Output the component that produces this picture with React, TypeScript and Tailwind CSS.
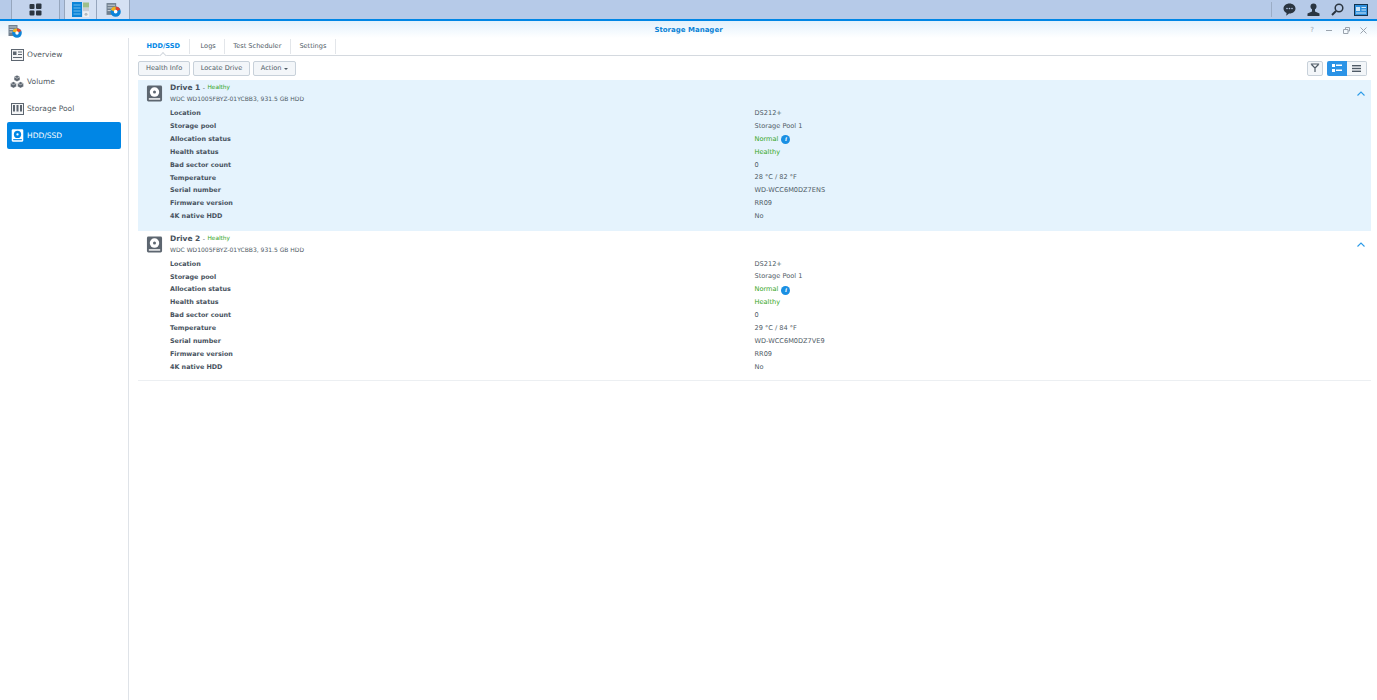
const font = { fontFamily: '"DejaVu Sans", sans-serif' };

function HddIcon({ light = false, size = 18 }: { light?: boolean; size?: number }) {
  const body = light ? "#ffffff" : "#5d6670";
  const inner = light ? "#0086e5" : "#ffffff";
  return (
    <svg width={size} height={size} viewBox="0 0 18 18">
      <rect x="1" y="0.5" width="16" height="17" rx="1.5" fill={body} />
      <circle cx="9" cy="7.5" r="5" fill={inner} />
      <circle cx="9" cy="7.5" r="1.6" fill={body} />
      <rect x="3" y="14" width="12" height="1.5" fill={inner} />
    </svg>
  );
}

function OverviewIcon() {
  return (
    <svg width="13" height="12" viewBox="0 0 13 12">
      <rect x="0.5" y="0.5" width="12" height="11" fill="#f4f5f6" stroke="#5d6670" />
      <rect x="2" y="2.500" width="3.500" height="3.500" fill="#5d6670" />
      <path d="M7 3h4M7 5.500h4M2 8.500h9" stroke="#5d6670" />
    </svg>
  );
}

function VolumeIcon() {
  return (
    <svg width="14" height="14" viewBox="0 0 13 13" fill="#5d6670" stroke="#ffffff" strokeWidth="0.300">
      <path d="M6.500 0.300l2.700 1.400v3L6.500 6.100 3.800 4.700v-3z" />
      <path d="M3.200 6.200l2.700 1.400v3l-2.700 1.500L0.500 10.600v-3z" />
      <path d="M9.800 6.200l2.700 1.400v3l-2.700 1.500-2.700-1.500v-3z" />
      <path d="M3.800 1.700l2.700 1.400 2.700-1.400M.5 7.600l2.700 1.400 2.700-1.400M7.100 7.600l2.700 1.400 2.700-1.400" fill="none" strokeWidth="0.500" />
    </svg>
  );
}

function PoolIcon() {
  return (
    <svg width="13" height="12" viewBox="0 0 13 12">
      <rect x="0.5" y="0.500" width="12" height="11" fill="#f4f5f6" stroke="#5d6670" />
      <path d="M3 2v6.500M6.500 2v6.500M10 2v6.500" stroke="#5d6670" strokeWidth="2" />
    </svg>
  );
}

function AppIcon({ size = 14 }: { size?: number }) {
  return (
    <svg width={size} height={size} viewBox="0 0 14 14">
      <rect x="0.500" y="1" width="9" height="11" fill="#71808f" />
      <path d="M1.500 3h7M1.500 5.500h7M1.500 8h7" stroke="#d9dfe5" strokeWidth="0.800" />
      <circle cx="9" cy="9" r="4.800" fill="#0b84d9" />
      <path d="M9 9V4.200A4.800 4.800 0 0 1 13.300 7z" fill="#e2412d" />
      <path d="M9 9L4.500 7.400A4.800 4.800 0 0 1 9 4.200z" fill="#f4b21c" />
      <circle cx="9" cy="9" r="1.700" fill="#ffffff" />
    </svg>
  );
}

function GridIcon() {
  return (
    <svg width="13" height="13" viewBox="0 0 13 13" fill="#2b3540">
      <rect x="0.500" y="1" width="5" height="5" rx="1" />
      <rect x="7" y="0.500" width="5.500" height="5.500" rx="1" />
      <rect x="0.500" y="7.500" width="5" height="5" rx="1" />
      <rect x="7" y="7.500" width="5.500" height="5" rx="1" />
    </svg>
  );
}

function PanelIcon() {
  return (
    <svg width="17" height="15" viewBox="0 0 17 15">
      <rect x="0" y="0" width="10" height="15" fill="#0a84d8" />
      <path d="M1.500 3h7M1.500 6h7M1.500 9h7M1.500 12h7" stroke="#8ccbf3" strokeWidth="0.800" />
      <rect x="11" y="0.500" width="6" height="5" fill="#9dbf8a" />
      <rect x="11" y="6" width="6" height="3" fill="#c9ced3" />
      <rect x="11" y="9.500" width="6" height="5.500" fill="#eef0f2" />
      <circle cx="14" cy="12.200" r="1.500" fill="#b3b9bf" />
    </svg>
  );
}

function Tab({ label, active = false, extra = false }: { label: string; active?: boolean; extra?: boolean }) {
  return (
    <div
      className={`relative flex h-[15px] items-center border-r border-[#e3e6ea] text-[6.600px] ${extra ? "pl-[11px] pr-[8px]" : "px-[8.500px]"} ${active ? "font-bold text-[#0086e5]" : "text-[#4f5b66]"}`}
    >
      {label}
      {active && (
        <span className="absolute bottom-[-4px] left-1/2 h-[5px] w-[5px] -translate-x-1/2 rotate-45 border-l border-t border-[#d4d9df] bg-white" />
      )}
    </div>
  );
}

function Btn({ children, tight = false }: { children: React.ReactNode; tight?: boolean }) {
  return (
    <div className={`flex h-[15px] items-center rounded-[2px] border border-[#c8d1da] bg-[#f3f6f9] pt-[1px] text-[6.600px] text-[#4f5b66] ${tight ? "px-[6.500px]" : "px-[7px]"}`}>
      {children}
    </div>
  );
}

function NavItem({ icon, label, active = false }: { icon: React.ReactNode; label: string; active?: boolean }) {
  return (
    <div
      className={`flex h-[27px] items-center gap-[3px] rounded-[2px] pl-[3px] text-[7.500px] ${active ? "bg-[#0086e5] text-white" : "text-[#50595f]"}`}
    >
      <span className="flex w-[14px] justify-center">{icon}</span>
      {label}
    </div>
  );
}

type Row = [string, string, string?];

function Drive({ name, rows, open }: { name: string; rows: Row[]; open?: boolean }) {
  return (
    <section className={`relative pt-[2px] ${open ? "h-[151px] bg-[#e5f3fd]" : "h-[150px] border-b border-[#eceff2] bg-white"}`}>
      <div className="flex">
        <div className="flex w-[32px] justify-center pt-[3px]">
          <HddIcon size={17} />
        </div>
        <div className="flex-1">
          <div className="flex h-[11px] items-center gap-[2.500px]">
            <span className="text-[7.500px] font-bold text-[#47525d]">{name}</span>
            <span className="text-[6px] text-[#47525d]">-</span>
            <span className="text-[5.800px] text-[#33a51b]">Healthy</span>
          </div>
          <div className="mt-[0.500px] h-[9px] text-[6px] leading-[9px] text-[#4f5b66]">WDC WD1005FBYZ-01YCBB3, 931.5 GB HDD</div>
        </div>
        <svg className="absolute right-[6px] top-[11px]" width="8" height="5" viewBox="0 0 8 5" fill="none" stroke="#2b9be8" strokeWidth="1.100">
          <path d="M0.500 4.500L4 1l3.500 3.500" />
        </svg>
      </div>
      <div className={open ? "mt-[5px] pl-[32px]" : "mt-[4.500px] pl-[32px]"}>
        {rows.map(([k, v, c]) => (
          <div key={k} className="grid h-[12.900px] grid-cols-[584.500px_1fr] items-center text-[6.600px]">
            <span className="text-[6.400px] font-bold text-[#47525d]">{k}</span>
            <span className={`flex items-center gap-[3px] ${c ? "text-[#33a51b]" : "text-[#4f5b66]"}`}>
              {v}
              {v === "Normal" && (
                <span className="flex h-[9px] w-[9px] items-center justify-center rounded-full bg-[#1a8fe3] text-[7px] font-bold italic text-white" style={{ fontFamily: '"Liberation Serif", serif' }}>
                  i
                </span>
              )}
            </span>
          </div>
        ))}
      </div>
    </section>
  );
}

const rows = (t: string, s: string): Row[] => [
  ["Location", "DS212+"],
  ["Storage pool", "Storage Pool 1"],
  ["Allocation status", "Normal", "g"],
  ["Health status", "Healthy", "g"],
  ["Bad sector count", "0"],
  ["Temperature", t],
  ["Serial number", s],
  ["Firmware version", "RR09"],
  ["4K native HDD", "No"],
];

export default function App() {
  return (
    <div className="flex h-[700px] w-[1377px] flex-col overflow-hidden bg-white" style={font}>
      <header className="flex h-[19px] items-stretch bg-[#b6cae8]">
        <div className="ml-[11px] flex w-[49px] items-center justify-center border-x border-[#96a6bd] bg-[#c3d3ec]">
          <GridIcon />
        </div>
        <div className="ml-[4px] flex w-[33px] items-center justify-center border-x border-[#96a6bd] bg-[#d5e1f3]">
          <PanelIcon />
        </div>
        <div className="flex w-[33px] items-center justify-center border-r border-[#96a6bd] bg-[#d5e1f3]">
          <AppIcon size={15} />
        </div>
        <div className="ml-auto flex items-center pr-[9px]">
          <span className="mr-[11px] h-[15px] w-px bg-[#9badc6]" />
          <svg className="mr-[11px]" width="13" height="13" viewBox="0 0 13 13" fill="#2b3540">
            <path d="M6.500 0.500c3.400 0 6 2.200 6 5s-2.600 5-6 5H6l-2.800 2.200.4-2.600C1.800 9.300.500 7.600.500 5.500c0-2.800 2.600-5 6-5z" />
            <circle cx="4" cy="5.500" r="0.800" fill="#b6cae8" />
            <circle cx="6.500" cy="5.500" r="0.800" fill="#b6cae8" />
            <circle cx="9" cy="5.500" r="0.800" fill="#b6cae8" />
          </svg>
          <svg className="mr-[11px]" width="13" height="13" viewBox="0 0 13 13" fill="#2b3540">
            <circle cx="6.500" cy="3.500" r="3" />
            <path d="M5 6h3v2.500l4.500 2V13H.500v-2.500l4.500-2z" />
          </svg>
          <svg className="mr-[10px]" width="13" height="13" viewBox="0 0 13 13" fill="none" stroke="#2b3540">
            <circle cx="8" cy="5" r="3.800" strokeWidth="1.500" />
            <path d="M5 8l-4 4" strokeWidth="2" />
          </svg>
          <svg width="14" height="12" viewBox="0 0 14 12">
            <rect x="0.500" y="0.500" width="13" height="11" fill="#2f8fdc" stroke="#14334f" />
            <rect x="2" y="3" width="4" height="4" fill="#cfe6f8" />
            <path d="M7.500 3.500H12M7.500 6H12M2 9h10" stroke="#cfe6f8" />
          </svg>
        </div>
      </header>
      <div className="h-[2px] bg-[#0086e5]" />
      <div className="flex h-[17px] items-center bg-gradient-to-b from-[#e2f1fc] to-white">
        <div className="flex w-[80px] pl-[8px] pt-[2px]">
          <AppIcon size={14} />
        </div>
        <div className="flex-1 pt-[2px] text-center text-[7px] font-bold text-[#0a82d6]">Storage Manager</div>
        <div className="flex w-[80px] items-center justify-end pr-[5.500px] pt-[1px] text-[#9aa3ad]">
          <span className="flex w-[17px] justify-center text-[7px] leading-none">?</span>
          <span className="flex w-[17px] justify-center"><span className="h-px w-[6px] bg-[#9aa3ad]" /></span>
          <span className="flex w-[17px] justify-center">
            <svg width="7" height="7" viewBox="0 0 7 7" fill="none" stroke="#9aa3ad"><path d="M2.500 2V.500h4v3.500H5M.500 2.500h4.500v4H.500z" /></svg>
          </span>
          <span className="flex w-[17px] justify-center">
            <svg width="7" height="7" viewBox="0 0 7 7" fill="none" stroke="#9aa3ad"><path d="M.5.5l6 6M6.500.5l-6 6" /></svg>
          </span>
        </div>
      </div>
      <div className="flex min-h-0 flex-1">
        <aside className="flex w-[129px] flex-col border-r border-[#dfe3e8] pl-[7px] pr-[7.500px] pt-[3px]">
          <NavItem icon={<OverviewIcon />} label="Overview" />
          <NavItem icon={<VolumeIcon />} label="Volume" />
          <NavItem icon={<PoolIcon />} label="Storage Pool" />
          <NavItem icon={<HddIcon light size={13} />} label="HDD/SSD" active />
        </aside>
        <main className="flex-1 pl-[9px] pr-[6px] pt-[1px]">
          <nav className="flex h-[17px] items-center border-b border-[#d4d9df] pb-[2px] pt-[1px]">
            <Tab label="HDD/SSD" active />
            <Tab label="Logs" extra />
            <Tab label="Test Scheduler" />
            <Tab label="Settings" />
          </nav>
          <div className="flex h-[24px] items-center justify-between pr-[4px]">
            <div className="flex gap-[3px]">
              <Btn>Health Info</Btn>
              <Btn tight>Locate Drive</Btn>
              <Btn>
                Action
                <span className="ml-[3px] h-0 w-0 border-x-[2px] border-t-[2px] border-x-transparent border-t-[#4f5b66]" />
              </Btn>
            </div>
            <div className="flex items-center">
              <div className="mr-[4px] flex h-[15px] w-[16px] items-center justify-center rounded-[2px] border border-[#c8d1da] bg-[#f3f6f9]">
                <svg width="10" height="10" viewBox="0 0 10 10" fill="none" stroke="#4f5b66" strokeWidth="1.200">
                  <path d="M.800 1h8.400M1.500 1.500L5 5v4M8.500 1.500L5 5" />
                </svg>
              </div>
              <div className="flex h-[15px] w-[20px] items-center justify-center rounded-l-[2px] bg-[#2b93e6]">
                <svg width="10" height="8" viewBox="0 0 10 8" fill="#ffffff">
                  <rect x="0" y="0" width="3" height="3" />
                  <rect x="0" y="5" width="3" height="3" />
                  <rect x="4" y="0.500" width="6" height="1.500" />
                  <rect x="4" y="5.500" width="6" height="1.500" />
                </svg>
              </div>
              <div className="flex h-[15px] w-[20px] items-center justify-center rounded-r-[2px] border border-l-0 border-[#c8d1da] bg-[#f3f6f9]">
                <svg width="9" height="7" viewBox="0 0 9 7" fill="#4f5b66">
                  <rect width="9" height="1.400" />
                  <rect y="2.800" width="9" height="1.400" />
                  <rect y="5.600" width="9" height="1.400" />
                </svg>
              </div>
            </div>
          </div>
          <Drive name="Drive 1" rows={rows("28 °C / 82 °F", "WD-WCC6M0DZ7ENS")} open />
          <Drive name="Drive 2" rows={rows("29 °C / 84 °F", "WD-WCC6M0DZ7VE9")} />
        </main>
      </div>
    </div>
  );
}
